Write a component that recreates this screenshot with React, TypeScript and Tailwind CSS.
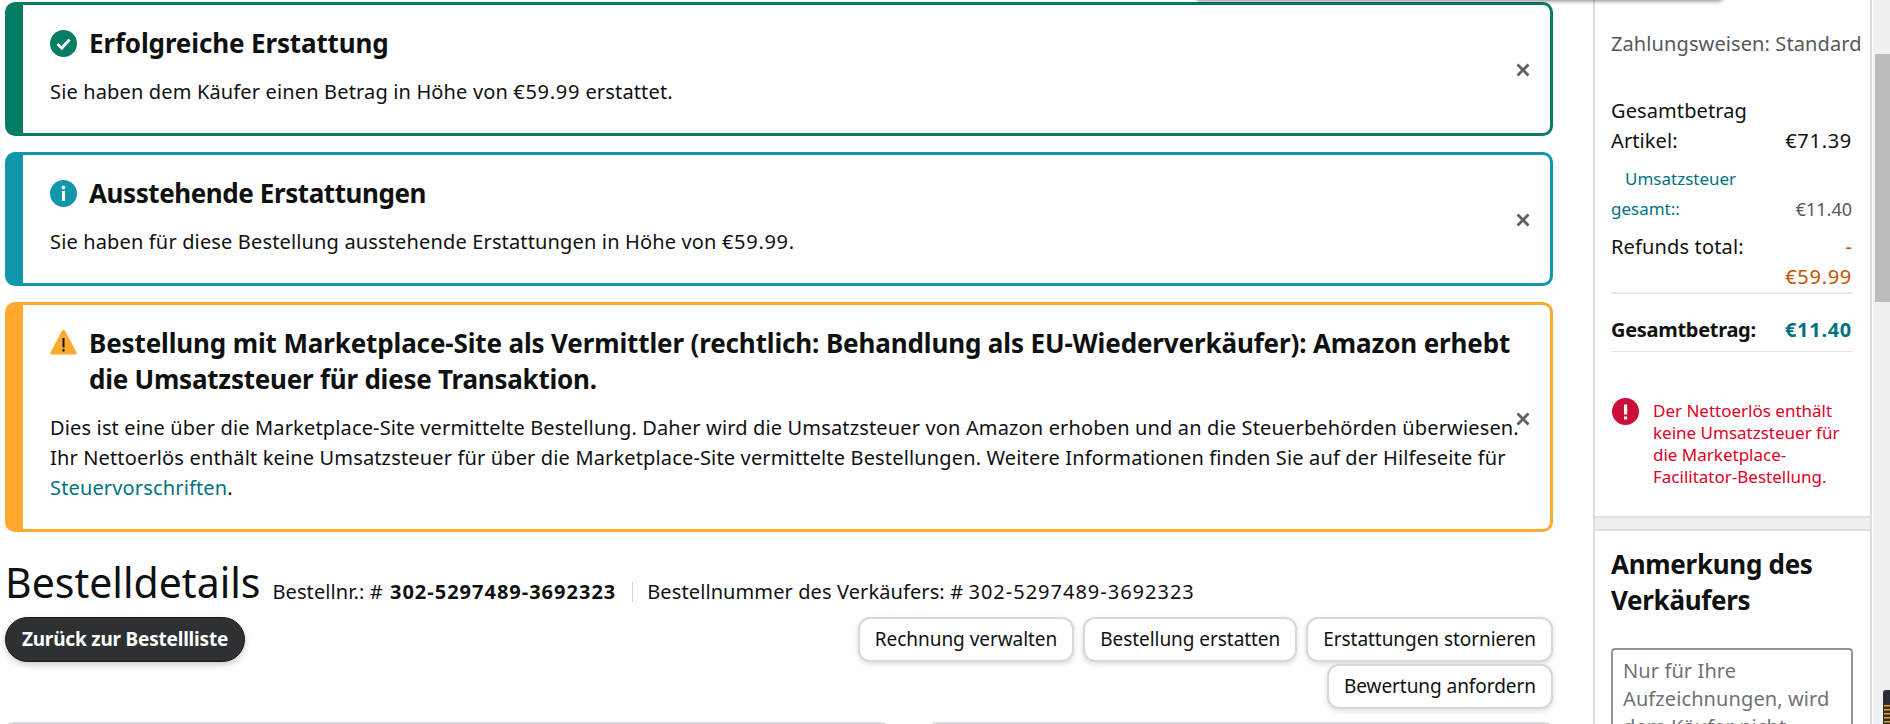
import React from "react";

const font = { fontFamily: '"Noto Sans", sans-serif' };

function Num({ children, wide }: { children: React.ReactNode; wide?: boolean }) {
  return <span className={wide ? "tracking-[1px]" : "tracking-[0.7px]"}>{children}</span>;
}

function CloseX({ top }: { top: string }) {
  return (
    <svg className={`absolute right-[20px] ${top}`} width="14" height="14" viewBox="0 0 14 14">
      <path d="M1.5 1.5 L12.5 12.5 M12.5 1.5 L1.5 12.5" stroke="#5f6161" strokeWidth="2.8" />
    </svg>
  );
}

function Alert({ border, icon, title, children, closeTop }: { border: string; icon: React.ReactNode; title: React.ReactNode; children: React.ReactNode; closeTop: string }) {
  return (
    <div className={`relative rounded-[10px] border-[3px] border-l-[18px] bg-white pt-[21px] pb-[26px] pl-[27px] ${border}`}>
      <div className="flex gap-[12px] text-[26px] leading-[36px] font-bold text-[#0f1111]">
        <div className="w-[27px] shrink-0 pt-[4px]">{icon}</div>
        <div className="-mt-[1px] pb-[1px] whitespace-nowrap tracking-[-0.13px]">{title}</div>
      </div>
      <div className="mt-[15px] whitespace-nowrap text-[20px] leading-[30px] tracking-[0.15px] text-[#0f1111]">{children}</div>
      <CloseX top={closeTop} />
    </div>
  );
}

function Btn({ children }: { children: React.ReactNode }) {
  return (
    <button className="h-[45px] rounded-[12px] border-2 border-[#d5d9d9] bg-white px-[15px] text-[19px] tracking-[-0.05px] whitespace-nowrap text-[#0f1111] shadow-[0_2px_5px_rgba(15,17,17,0.15)]">
      {children}
    </button>
  );
}

export default function App() {
  return (
    <div style={font} className="relative flex h-[724px] w-[1890px] overflow-hidden bg-white">
      {/* main column */}
      <div className="w-[1593px] shrink-0 pt-[2px] pr-[40px] pl-[5px]">
        <div className="flex flex-col gap-[16px]">
          <Alert
            border="border-[#067d62]"
            closeTop="top-[58px]"
            icon={
              <svg width="27" height="27" viewBox="0 0 27 27">
                <circle cx="13.5" cy="13.5" r="13.5" fill="#067d62" />
                <path d="M7.5 14 L11.8 18.2 L19.5 9.5" fill="none" stroke="#fff" strokeWidth="2.8" />
              </svg>
            }
            title="Erfolgreiche Erstattung"
          >
            Sie haben dem Käufer einen Betrag in Höhe von <Num>€59.99</Num> erstattet.
          </Alert>
          <Alert
            border="border-[#1196ab]"
            closeTop="top-[58px]"
            icon={
              <svg width="27" height="27" viewBox="0 0 27 27">
                <circle cx="13.5" cy="13.5" r="13.5" fill="#1196ab" />
                <circle cx="13.5" cy="7.5" r="1.9" fill="#fff" />
                <rect x="12" y="11" width="3" height="10" fill="#fff" />
              </svg>
            }
            title={<span className="tracking-[-0.42px]">Ausstehende Erstattungen</span>}
          >
            Sie haben für diese Bestellung ausstehende Erstattungen in Höhe von <Num>€59.99</Num>.
          </Alert>
          <Alert
            border="border-[#ffa92e]"
            closeTop="top-[107px]"
            icon={
              <svg width="27" height="27" viewBox="0 0 27 27" className="-mt-[1px]">
                <path d="M13.5 1 C14.5 1 15 1.6 15.4 2.4 L26.6 23.5 C27.2 24.8 26.4 25.5 25.2 25.5 L1.8 25.5 C0.6 25.5 -0.2 24.8 0.4 23.5 L11.6 2.4 C12 1.6 12.5 1 13.5 1 Z" fill="#ffa92e" />
                <rect x="12.5" y="9" width="2" height="9.5" fill="#111" />
                <rect x="12.5" y="20" width="2" height="2.5" fill="#111" />
              </svg>
            }
            title={
              <>
                Bestellung mit Marketplace-Site als Vermittler (rechtlich: Behandlung als EU-Wiederverkäufer): Amazon erhebt
                <br />
                <span className="tracking-[-0.23px]">die Umsatzsteuer für diese Transaktion.</span>
              </>
            }
          >
            Dies ist eine über die Marketplace-Site vermittelte Bestellung. Daher wird die Umsatzsteuer von Amazon erhoben und an die Steuerbehörden überwiesen.
            <br />
            Ihr Nettoerlös enthält keine Umsatzsteuer für über die Marketplace-Site vermittelte Bestellungen. Weitere Informationen finden Sie auf der Hilfeseite für
            <br />
            <span className="text-[#01727f]">Steuervorschriften</span>.
          </Alert>
        </div>

        <div className="mt-[23px] flex h-[54px] items-end whitespace-nowrap text-[#0f1111]">
          <h1 className="text-[41px] leading-[54px] font-normal">Bestelldetails</h1>
          <div className="mb-[5px] ml-[12px] flex items-center text-[20px] leading-[24px] tracking-[0.1px]">
            <span>
              Bestellnr.: # <b className="ml-[2px]"><Num wide>302-5297489-3692323</Num></b>
            </span>
            <span className="mr-[14px] ml-[16px] h-[20px] w-px bg-[#d5d9d9]" />
            <span>Bestellnummer des Verkäufers: # <Num wide>302-5297489-3692323</Num></span>
          </div>
        </div>

        <div className="mt-[8px] flex items-start justify-between">
          <button className="h-[45px] w-[240px] rounded-full border border-[#14181a] bg-[#2d3132] text-[19px] font-bold tracking-[-0.2px] whitespace-nowrap text-white shadow-[0_3px_6px_rgba(15,17,17,0.2)]">
            Zurück zur Bestellliste
          </button>
          <div className="flex w-[720px] flex-wrap justify-end gap-x-[9px] gap-y-[2px]">
            <Btn>Rechnung verwalten</Btn>
            <Btn>Bestellung erstatten</Btn>
            <Btn>Erstattungen stornieren</Btn>
            <Btn>Bewertung anfordern</Btn>
          </div>
        </div>

        <div className="mt-[13px] flex gap-[40px]">
          <div className="h-[60px] flex-1 rounded-[8px] border-2 border-[#d5d9d9]" />
          <div className="h-[60px] w-[624px] rounded-[8px] border-2 border-[#d5d9d9]" />
        </div>
      </div>

      {/* sidebar */}
      <div className="h-[724px] w-[279px] shrink-0 overflow-hidden border-x-2 border-[#dddddd]">
        <div className="h-[516px] pt-[29px] pr-[17px] pl-[16px]">
          <div className="text-[20px] leading-[30px] tracking-[0.1px] whitespace-nowrap text-[#565959]">Zahlungsweisen: Standard</div>
          <div className="mt-[37px] text-[20px] leading-[30px] tracking-[0.1px] text-[#0f1111]">Gesamtbetrag</div>
          <div className="flex justify-between pr-[1px] text-[20px] leading-[30px] tracking-[0.1px] text-[#0f1111]">
            <span>Artikel:</span>
            <Num>€71.39</Num>
          </div>
          <div className="mt-[8px] flex items-end justify-between pr-[1px] text-[17px] leading-[30px]">
            <span className="text-[#01727f]">
              <span className="pl-[14px]">Umsatzsteuer</span>
              <br />
              gesamt::
            </span>
            <span className="text-[18px] text-[#565959]">€11.40</span>
          </div>
          <div className="mt-[8px] flex items-start justify-between pr-[1px] text-[20px] leading-[30px] tracking-[0.15px]">
            <span className="text-[#0f1111]">Refunds total:</span>
            <span className="text-right text-[#c45500]">
              -
              <br />
              <Num>€59.99</Num>
            </span>
          </div>
          <div className="h-[2px] bg-[#e7e7e7]" />
          <div className="mt-[21px] flex justify-between pr-[1px] text-[20px] leading-[30px] font-bold">
            <span className="tracking-[-0.3px] text-[#0f1111]">Gesamtbetrag:</span>
            <span className="text-[#01727f]"><Num>€11.40</Num></span>
          </div>
          <div className="mt-[6px] h-px bg-[#e7e7e7]" />
          <div className="mt-[46px] flex">
            <svg width="27" height="27" viewBox="0 0 27 27" className="ml-[1px] shrink-0">
              <circle cx="13.5" cy="13.5" r="13.5" fill="#cc0c39" />
              <rect x="12" y="6.5" width="3.2" height="10" fill="#fff" />
              <rect x="12" y="18.5" width="3.2" height="3" fill="#fff" />
            </svg>
            <div className="mt-[2px] ml-[14px] text-[17px] leading-[22px] whitespace-nowrap text-[#e00024]">
              Der Nettoerlös enthält
              <br />
              keine Umsatzsteuer für
              <br />
              die Marketplace-
              <br />
              Facilitator-Bestellung.
            </div>
          </div>
        </div>
        <div className="h-[15px] border-y-2 border-[#e0e0e0] bg-[#f0f0f0]" />
        <div className="pt-[15px] pr-[17px] pl-[16px]">
          <div className="text-[26px] leading-[36px] font-bold tracking-[-0.3px] text-[#0f1111]">
            Anmerkung des
            <br />
            Verkäufers
          </div>
          <div className="mt-[30px] h-[120px] rounded-[4px] border-2 border-[#8d9696] px-[10px] pt-[7px] text-[20px] leading-[28px] tracking-[0.1px] whitespace-nowrap text-[#6f7373]">
            Nur für Ihre
            <br />
            Aufzeichnungen, wird
            <br />
            dem Käufer nicht
          </div>
        </div>
      </div>

      {/* scrollbar */}
      <div className="ml-px h-[724px] flex-1 bg-[#f0f0f0] pt-[54px] pl-[2px]">
        <div className="h-[248px] bg-[#bbbbbb]" />
      </div>

      {/* overlays */}
      <div className="absolute top-[-10px] left-[1197px] h-[10px] w-[525px] shadow-[0_1px_4px_rgba(0,0,0,0.5)]" />
      <svg className="absolute top-[690px] left-[1883px]" width="7" height="34" viewBox="0 0 7 34">
        <path d="M0 34 V3 Q0 0 3 0 H7 V34 Z" fill="#2a2f36" />
        {[15, 19, 23, 27, 31].map((y) => (
          <rect key={y} x="1" y={y} width="6" height="1.5" fill="#ff9900" />
        ))}
      </svg>
    </div>
  );
}
